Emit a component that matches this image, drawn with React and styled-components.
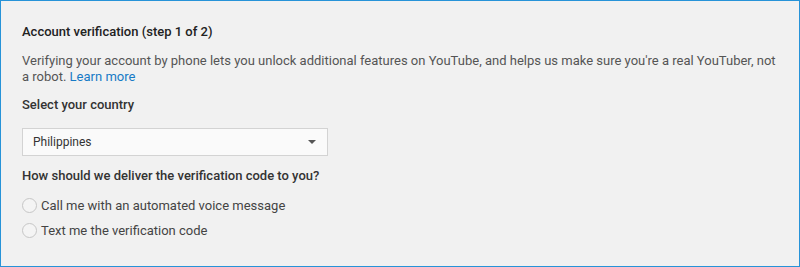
import React from "react"
import styled, { createGlobalStyle } from "styled-components"

const GlobalStyle = createGlobalStyle`
	* {
		box-sizing: border-box;
	}

	body {
		margin: 0;
		background: #f1f1f1;
		font-family: Roboto, "Liberation Sans", Arial, sans-serif;
	}
`

const Panel = styled.section`
	width: 800px;
	height: 267px;
	padding: 23px 21px 0;
	background-color: #f1f1f1;
	border: 1px solid #2793d8;
	display: flex;
	flex-direction: column;
	font-size: 13px;
	line-height: 16px;
	color: #333;
`

const Title = styled.h2`
	margin: 0;
	font-size: 13px;
	font-weight: 500;
	color: #222;
`

const Intro = styled.p`
	margin: 13px 0 0;
	color: #555;

	span {
		display: block;
	}

	a {
		color: #167ac6;
		text-decoration: none;
	}
`

const Label = styled.h3`
	margin: ${(p) => p.$top}px 0 0;
	font-size: 13px;
	font-weight: 500;
	color: #333;
`

const SelectBox = styled.div`
	margin-top: 15px;
	width: 306px;
	height: 28px;
	padding: 0 11px 0 10px;
	background-color: #fafafa;
	border: 1px solid #d3d3d3;
	display: flex;
	align-items: center;
	justify-content: space-between;
	font-size: 12px;
	color: #333;
	cursor: pointer;
`

const Caret = styled.span`
	width: 0;
	height: 0;
	border-left: 4px solid transparent;
	border-right: 4px solid transparent;
	border-top: 4px solid #555;
`

const Options = styled.div`
	margin-top: 14px;
	display: flex;
	flex-direction: column;
	gap: 10px;
`

const Option = styled.label`
	display: flex;
	align-items: center;
	gap: 4px;
	height: 15px;
	color: #444;
	cursor: pointer;
`

const Radio = styled.span`
	width: 15px;
	height: 15px;
	border-radius: 50%;
	border: 1px solid #c6c6c6;
	background-color: #f4f4f4;
	flex-shrink: 0;
`

const App = () => {
	return (
		<>
			<GlobalStyle />
			<Panel>
				<Title>Account verification (step 1 of 2)</Title>
				<Intro>
					<span>
						{"Verifying your account by phone lets you unlock additional features on YouTube, and helps us make sure you're a real YouTuber, not"}
					</span>
					<span>
						{"a robot. "}
						<a href='#'>Learn more</a>
					</span>
				</Intro>

				<Label $top={12}>Select your country</Label>
				<SelectBox>
					<span>Philippines</span>
					<Caret />
				</SelectBox>

				<Label $top={12}>How should we deliver the verification code to you?</Label>
				<Options>
					<Option>
						<Radio />
						Call me with an automated voice message
					</Option>
					<Option>
						<Radio />
						Text me the verification code
					</Option>
				</Options>
			</Panel>
		</>
	)
}

export default App
